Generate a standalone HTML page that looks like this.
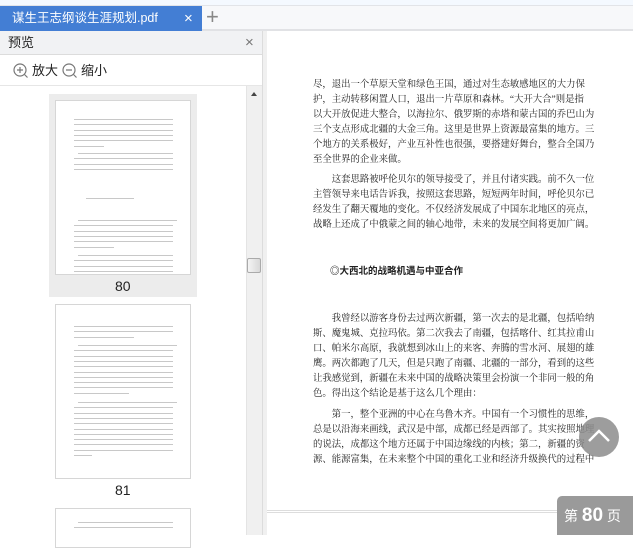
<!DOCTYPE html>
<html><head><meta charset="utf-8"><style>
*{margin:0;padding:0;box-sizing:border-box}
body{width:633px;height:535px;overflow:hidden;background:#fff;position:relative;font-family:"Liberation Sans","Noto Sans CJK SC",sans-serif;color:#333}
.a{position:absolute}
.t{font-family:"Liberation Serif","Noto Serif CJK SC",serif;font-size:9.4px;line-height:15px;color:#222;white-space:nowrap}
.th{position:absolute;background:#fff;border:1px solid #d6d6d6}
.ln{position:absolute;height:1px;background:#c8c8c8}
</style></head><body>
<div class="a" style="left:0;top:0;width:633px;height:6px;background:#f4f9ff;border-bottom:1px solid #e2e4e8"></div>
<div class="a" style="left:0;top:6px;width:633px;height:25px;background:#f7f8fa;border-bottom:2px solid #e1e2e5"></div>
<div class="a" style="left:0;top:6px;width:202px;height:25px;background:#437ed4;color:#fff;font-size:12.5px;line-height:25px;padding-left:12px">谋生王志纲谈生涯规划.pdf<span class="a" style="left:184px;top:0;font-size:15px">×</span></div>
<div class="a" style="left:206px;top:4px;font-size:22px;line-height:25px;color:#888;font-weight:200">+</div>
<!-- sidebar -->
<div class="a" style="left:0;top:31px;width:263px;height:504px;background:#fff;border-right:1px solid #dcdcdc"></div>
<div class="a" style="left:0;top:31px;width:262px;height:24px;background:#f1f2f4;border-bottom:1px solid #dcdcdc;font-size:13px;line-height:23px;padding-left:8px;color:#222">预览<span class="a" style="left:245px;top:0;color:#777;font-size:15px">×</span></div>
<div class="a" style="left:0;top:55px;width:262px;height:31px;border-bottom:1px solid #e6e6e6;font-size:13px;line-height:31px;color:#222">
<svg class="a" style="left:13px;top:8px" width="16" height="16"><circle cx="7" cy="7" r="6" fill="none" stroke="#777" stroke-width="1.2"/><path d="M4 7h6M7 4v6M11.5 11.5l3 3" stroke="#777" stroke-width="1.2"/></svg>
<span class="a" style="left:32px">放大</span>
<svg class="a" style="left:62px;top:8px" width="16" height="16"><circle cx="7" cy="7" r="6" fill="none" stroke="#777" stroke-width="1.2"/><path d="M4 7h6M11.5 11.5l3 3" stroke="#777" stroke-width="1.2"/></svg>
<span class="a" style="left:81px">缩小</span></div>
<div class="a" style="left:49px;top:94px;width:148px;height:203px;background:#ececec"></div>
<div class="th" style="left:55px;top:100px;width:136px;height:175px"></div>
<div class="a" style="left:115px;top:278px;font-size:14px;color:#222">80</div>
<div class="th" style="left:55px;top:304px;width:136px;height:175px"></div>
<div class="a" style="left:115px;top:482px;font-size:14px;color:#222">81</div>
<div class="th" style="left:55px;top:508px;width:136px;height:40px"></div>
<div id="tl"></div>
<!-- scrollbar -->
<div class="a" style="left:246px;top:86px;width:16px;height:449px;background:#f0f0f0;border-left:1px solid #e4e4e4"></div>
<div class="a" style="left:251px;top:92px;width:0;height:0;border-left:3px solid transparent;border-right:3px solid transparent;border-bottom:4px solid #444"></div>
<div class="a" style="left:247px;top:258px;width:14px;height:15px;background:linear-gradient(90deg,#f4f4f4,#d8d8d8);border:1px solid #aaa;border-radius:2px"></div>
<div class="a" style="left:263px;top:31px;width:4px;height:504px;background:#f0f0f0"></div>
<!-- main -->
<div class="a t" style="left:313px;top:78px">尽，退出一个草原天堂和绿色王国，通过对生态敏感地区的大力保<br>护，主动转移闲置人口，退出一片草原和森林。“大开大合”则是指<br>以大开放促进大整合，以海拉尔、俄罗斯的赤塔和蒙古国的乔巴山为<br>三个支点形成北疆的大金三角。这里是世界上资源最富集的地方。三<br>个地方的关系极好，产业互补性也很强，要搭建好舞台，整合全国乃<br>至全世界的企业来做。</div>
<div class="a t" style="left:313px;top:173px">　　这套思路被呼伦贝尔的领导接受了，并且付诸实践。前不久一位<br>主管领导来电话告诉我，按照这套思路，短短两年时间，呼伦贝尔已<br>经发生了翻天覆地的变化。不仅经济发展成了中国东北地区的亮点，<br>战略上还成了中俄蒙之间的轴心地带，未来的发展空间将更加广阔。</div>
<div class="a" style="left:330px;top:263px;font-size:9.5px;font-weight:bold;color:#222;font-family:'Liberation Sans','Noto Sans CJK SC',sans-serif">◎大西北的战略机遇与中亚合作</div>
<div class="a t" style="left:313px;top:312px">　　我曾经以游客身份去过两次新疆，第一次去的是北疆，包括哈纳<br>斯、魔鬼城、克拉玛依。第二次我去了南疆，包括喀什、红其拉甫山<br>口、帕米尔高原，我就想到冰山上的来客、奔腾的雪水河、展翅的雄<br>鹰。两次都跑了几天，但是只跑了南疆、北疆的一部分，看到的这些<br>让我感觉到，新疆在未来中国的战略决策里会扮演一个非同一般的角<br>色。得出这个结论是基于这么几个理由：</div>
<div class="a t" style="left:313px;top:408px">　　第一，整个亚洲的中心在乌鲁木齐。中国有一个习惯性的思维，<br>总是以沿海来画线，武汉是中部，成都已经是西部了。其实按照地理<br>的说法，成都这个地方还属于中国边缘线的内核；第二，新疆的资<br>源、能源富集，在未来整个中国的重化工业和经济升级换代的过程中</div>
<div class="a" style="left:267px;top:510px;width:366px;height:3px;border-top:1px solid #ddd;border-bottom:1px solid #ddd"></div>
<div class="a" style="left:579px;top:417px;width:40px;height:40px;border-radius:50%;background:rgba(140,140,140,.85)"></div>
<svg class="a" style="left:579px;top:417px" width="40" height="40"><path d="M10 24L20 14L30 24" fill="none" stroke="#fff" stroke-width="2.5"/></svg>
<div class="a" style="left:557px;top:496px;width:76px;height:39px;background:#9a9a9a;border-top-left-radius:5px;color:#fff;font-size:14px;line-height:39px;padding-left:7px">第 <b style="font-size:19px">80</b> 页</div>
<script>
var h='';function pg(y0,rows){rows.forEach(function(r){h+='<div class="ln" style="left:'+(74+(r[1]||0))+'px;top:'+Math.round(y0+r[0])+'px;width:'+(r[2]||99)+'px"></div>'});}
var a=[];for(var i=0;i<6;i++)a.push([19+i*5.3,0,i==5?30:99]);for(i=0;i<4;i++)a.push([53+i*5.3,i==0?4:0,i==0?95:99]);a.push([98,12,48]);for(i=0;i<6;i++)a.push([120+i*5.3,i==0?4:0,i==5?40:99]);for(i=0;i<4;i++)a.push([155+i*5.3,i==0?4:0,i==0?95:99]);
pg(100,a);
var b=[];for(i=0;i<3;i++)b.push([22+i*5.3,0,i==2?60:99]);for(i=0;i<10;i++)b.push([41+i*5.3,i==0?4:0,i==9?55:99]);for(i=0;i<11;i++)b.push([98+i*5.3,i==0?4:0,i==10?18:99]);
pg(304,b);pg(508,[[14,4,95],[19,0,99]]);
document.getElementById('tl').innerHTML=h;
</script>
</body></html>
